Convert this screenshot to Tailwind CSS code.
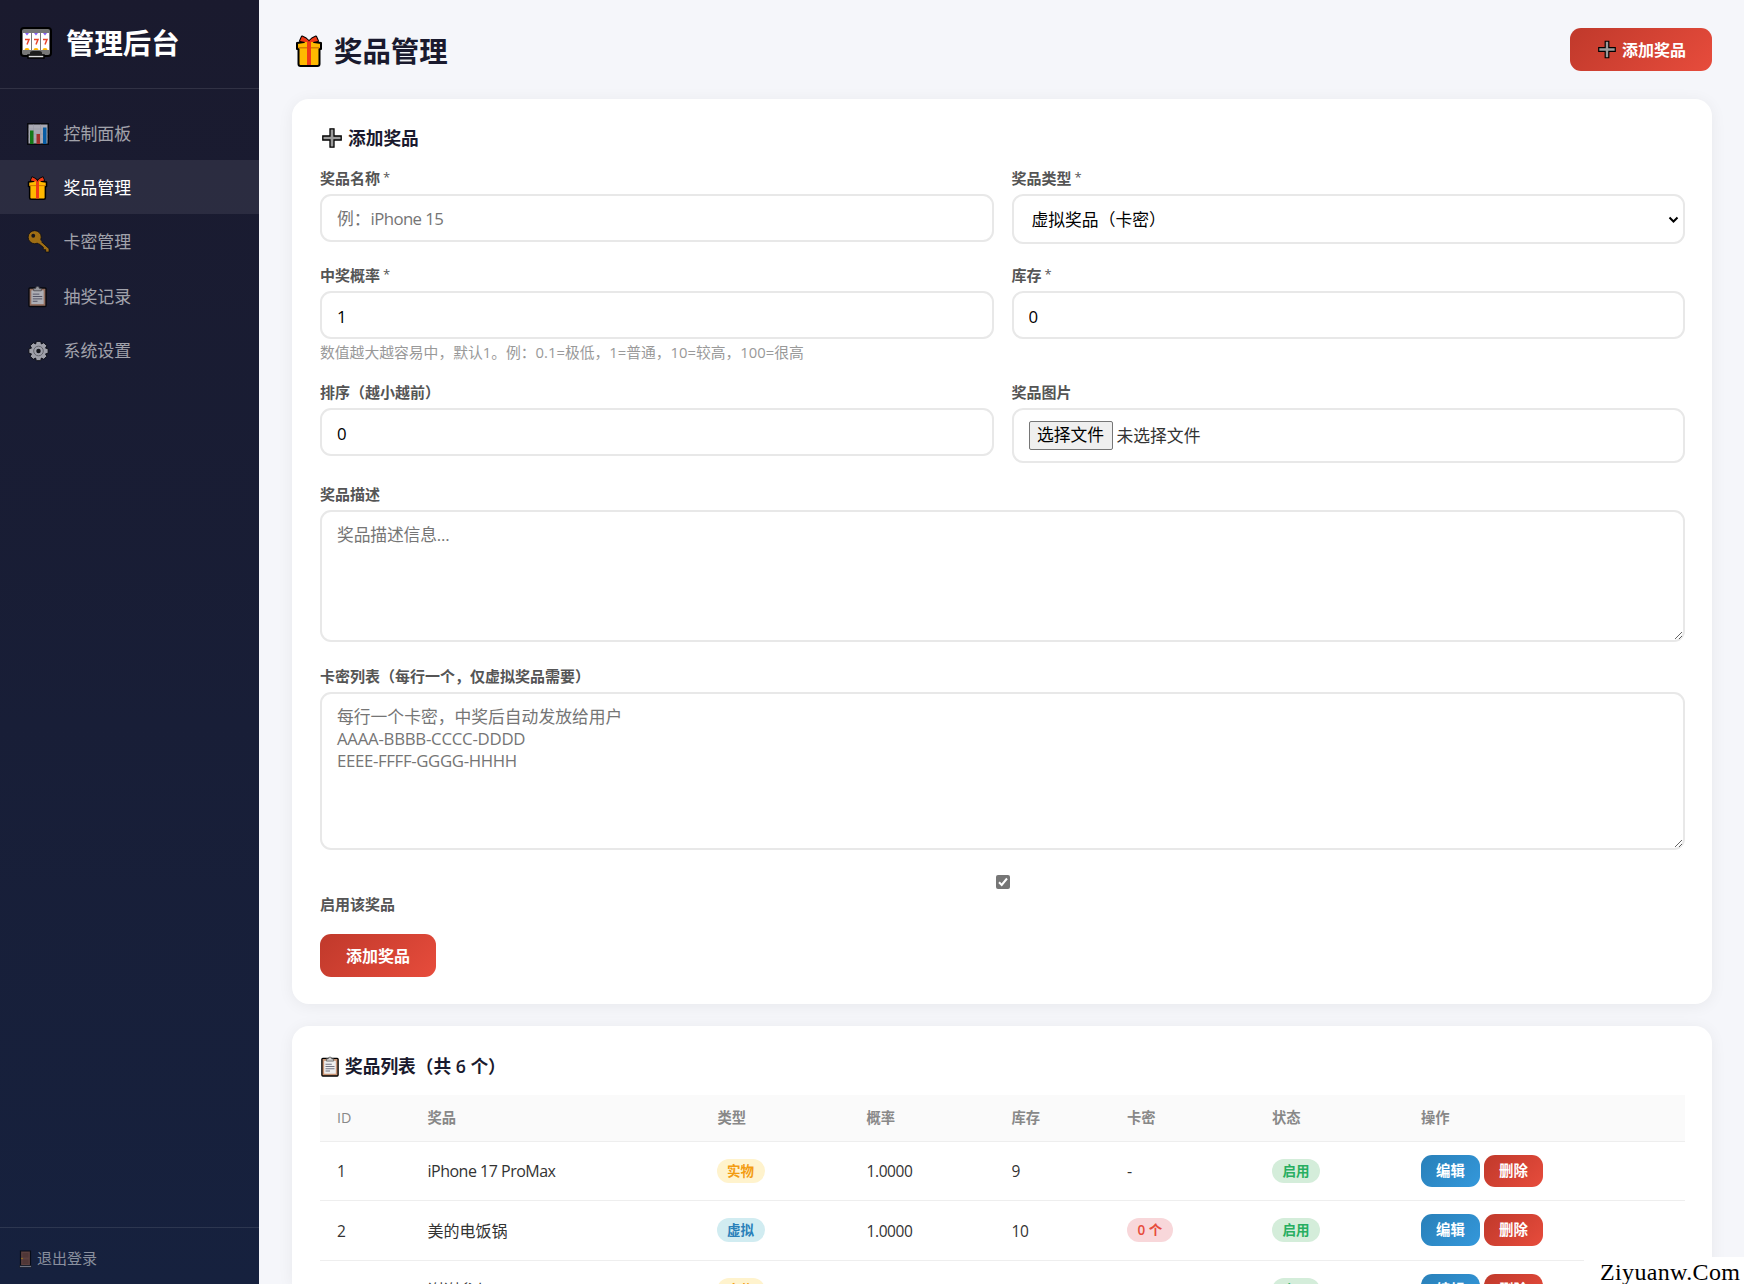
<!DOCTYPE html>
<html lang="zh-CN">

<head>
  <meta charset="UTF-8">
  <meta name="viewport" content="width=device-width, initial-scale=1.0">
  <script src="https://cdn.jsdelivr.net/npm/@tailwindcss/browser@4"></script>
  <title>奖品管理</title>
</head>

<body class="h-screen overflow-hidden flex bg-[#f5f6fa] text-[#333] font-['Open_Sans','Noto_Sans_CJK_SC',sans-serif]">

  <!-- iconos -->
  <svg class="hidden">
    <symbol id="i-slot" viewBox="0 0 32 32">
      <rect x="1" y="1" width="30" height="28" rx="3" fill="#777" stroke="#000" stroke-width="2" />
      <path d="M8 28h16v3H8z" fill="#ddd" stroke="#000" stroke-width="1.5" />
      <path d="M10 28v-2q0-2 3-2h6q3 0 3 2v2z" fill="#1c1c1c" />
      <path d="M3 6h8v17H3zM12 6h8v17h-8zM21 6h8v17h-8z" fill="#fff" />
      <path d="M5 6h4l-2 2.5zM14 6h4l-2 2.5zM23 6h4l-2 2.5z" fill="#8661f5" />
      <path d="M4.500 23a2.500 2 0 0 1 5 0zM13.500 23a2.500 2 0 0 1 5 0zM22.500 23a2.500 2 0 0 1 5 0z" fill="#ffb900" />
      <path d="M5 12.500h4l-2 5M14 12.500h4l-2 5M23 12.500h4l-2 5" fill="none" stroke="#e8442c" stroke-width="1.500" />
    </symbol>
    <symbol id="i-chart" viewBox="0 0 22 22">
      <rect x=".75" y=".75" width="20.500" height="20.500" fill="#e6e6ea" stroke="#000" stroke-width="1.500" />
      <path d="M1.500 6h19M1.500 11h19M1.500 16h19M6.500 1.500v19M13.500 1.500v19" stroke="#cfcfd6" stroke-width=".6" />
      <path d="M3 7.500h3.500V21H3z" fill="#13a10e" />
      <path d="M9.500 11H13v10H9.500z" fill="#e03a2c" />
      <path d="M16 4.500h3.500V21H16z" fill="#0078d4" />
    </symbol>
    <symbol id="i-gift" viewBox="0 0 28 32">
      <path d="M9 7 5 6 7 1.500l4 2q3 2 3 4 0-2 3-4l4-2L23 6l-4 1 7 1v6h-1.500v15q0 2-2 2h-17q-2 0-2-2V14H2V8z" fill="#ffb900" stroke="#000" stroke-width="2" stroke-linejoin="round" />
      <path d="M5 6 7 1.500l4 2q3 2 3 4 0-2 3-4l4-2L23 6l-5 1H10z" fill="#f03a17" />
      <path d="M3.500 12h21v1.500h-21z" fill="#d67f00" />
      <path d="M12 7h4v23h-4z" fill="#f03a17" />
    </symbol>
    <symbol id="i-key" viewBox="0 0 24 24">
      <path d="m11 9 11.500 10.500V23H19v-2.500h-2.500V18L9 12z" fill="#e69a05" stroke="#000" stroke-width=".8" />
      <circle cx="7.500" cy="7.500" r="6.800" fill="#e69a05" stroke="#000" stroke-width=".8" />
      <path d="M11 8l4 4-3.500 2L9 12z" fill="#e69a05" />
      <circle cx="6" cy="6" r="2" fill="#111" />
    </symbol>
    <symbol id="i-clip" viewBox="0 0 20 23">
      <rect x="1" y="2.500" width="18" height="19.500" rx="1" fill="#c89372" stroke="#000" stroke-width="1.500" />
      <path d="M3.500 5h13v14.500h-13z" fill="#eee" />
      <path d="M6 5.500V3h2q0-2 2-2t2 2h2v2.500z" fill="#ccc" stroke="#555" stroke-width=".8" />
      <path d="M5 9h7M5 11.500h10M5 14h10M5 16.500h5" stroke="#667" stroke-width="1" />
    </symbol>
    <symbol id="i-gear" viewBox="0 0 24 24">
      <path d="M9.500 1h5l.8 3 2.700-1.500L21.500 6 20 8.700l3 .8v5l-3 .8 1.500 2.700-3.500 3.500-2.700-1.500-.8 3h-5l-.8-3L6 21.500 2.500 18 4 15.300l-3-.8v-5l3-.8L2.500 6 6 2.500 8.700 4z" fill="#d8d8dc" stroke="#000" stroke-width="1" stroke-linejoin="round" />
      <circle cx="12" cy="12" r="5.500" fill="none" stroke="#777" stroke-width="1" />
      <circle cx="12" cy="12" r="2.600" fill="#111" />
    </symbol>
    <symbol id="i-door" viewBox="0 0 13 18">
      <path d="M1.500 1h10v14.500h-10z" fill="#8b5540" stroke="#000" stroke-width="1.200" />
      <path d="M3.500 3h6v4.500h-6zM3.500 9.500h6v4.500h-6z" fill="#774634" />
      <path d="M.5 15.500h12v2H.5z" fill="#a9a9b0" stroke="#000" stroke-width=".6" />
      <circle cx="3" cy="8.500" r=".8" fill="#ffb900" />
    </symbol>
    <symbol id="i-plus" viewBox="0 0 20 20">
      <path d="M8 .8h4V8h7.200v4H12v7.200H8V12H.8V8H8z" fill="#9b9b9b" stroke="#000" stroke-width="1.300" />
    </symbol>
  </svg>

  <aside class="w-[259px] shrink-0 h-full flex flex-col bg-linear-to-b from-[#1a1a2e] to-[#16213e]">
    <div class="h-[89px] shrink-0 flex items-center gap-[14px] pl-[20px] pb-[2px] border-b border-white/10">
      <svg class="w-8 h-8"><use href="#i-slot" /></svg>
      <h2 class="text-[28.400px] leading-none font-bold text-white">管理后台</h2>
    </div>
    <nav class="mt-[17px] flex-1 text-[16.900px] text-white/60">
      <a class="h-[54.300px] flex items-center pl-[27px] pt-px"><svg class="w-[22px] h-[22px] mr-[14.500px] opacity-70"><use href="#i-chart" /></svg>控制面板</a>
      <a class="h-[54px] flex items-center pl-[27px] pt-px bg-white/8 text-white"><svg class="w-[21px] h-[24px] mr-[15.500px]"><use href="#i-gift" /></svg>奖品管理</a>
      <a class="h-[54.300px] flex items-center pl-[27px] pt-px"><svg class="w-[24px] h-[23px] mr-[12.500px] opacity-65"><use href="#i-key" /></svg>卡密管理</a>
      <a class="h-[54.300px] flex items-center pl-[28px] pt-[2px]"><svg class="w-[19px] h-[23px] mr-[16.500px] opacity-70"><use href="#i-clip" /></svg>抽奖记录</a>
      <a class="h-[54.300px] flex items-center pl-[28px] pt-[2px]"><svg class="w-[21px] h-[22px] mr-[14.500px] opacity-70"><use href="#i-gear" /></svg>系统设置</a>
    </nav>
    <div class="h-[57px] shrink-0 flex items-center pl-[19px] pt-[5px] border-t border-white/10 text-[15px] text-white/50">
      <svg class="w-[13px] h-[18px] mr-[5px] opacity-60"><use href="#i-door" /></svg>退出登录
    </div>
  </aside>

  <main class="flex-1 pl-[33px] pr-[32px] pt-[28px]">
    <header class="h-[43px] mb-[28px] flex items-center justify-between">
      <h1 class="flex items-center text-[28.400px] leading-none font-bold text-[#1a1a2e] pl-[3px] pt-[3px]">
        <svg class="w-[28px] h-[32px] mr-[11px]"><use href="#i-gift" /></svg>奖品管理
      </h1>
      <button class="w-[142px] h-[43px] flex items-center pl-[28px] rounded-[11px] bg-linear-135 from-[#c0392b] to-[#e74c3c] text-white text-[16px] font-semibold">
        <svg class="w-[18px] h-[19px] mr-[6px]"><use href="#i-plus" /></svg>添加奖品
      </button>
    </header>

    <section class="h-[905px] mb-[22px] pl-[28px] pr-[27px] pt-[27px] bg-white rounded-[17px] shadow-[0_2px_16px_rgba(0,0,0,0.06)]">
      <h3 class="h-6 mb-[18px] flex items-center text-[17.700px] font-semibold text-[#1a1a2e]">
        <svg class="w-[20px] h-[20px] ml-[2px] mr-[6px]"><use href="#i-plus" /></svg>添加奖品
      </h3>

      <div class="grid grid-cols-2 gap-x-[18px] text-[16.800px] text-black">
        <div class="mb-[23px]">
          <label class="flex items-center h-5 mb-[6px] text-[15px] font-semibold text-[#555]">奖品名称<span class="ml-[3px] text-[13px] font-normal">*</span></label>
          <div class="h-12 flex items-center px-[15px] pt-[2px] border-2 border-[#e8e8e8] rounded-[11px] text-[#757575]">例：<span class="tracking-[-0.600px]">iPhone 15</span></div>
        </div>
        <div>
          <label class="flex items-center h-5 mb-[6px] text-[15px] font-semibold text-[#555]">奖品类型<span class="ml-[3px] text-[13px] font-normal">*</span></label>
          <div class="h-[50px] flex items-center justify-between pl-[18px] pr-[4px] pt-[2px] border-2 border-[#e8e8e8] rounded-[11px]">虚拟奖品（卡密）
            <svg class="w-[11px] h-[8px]" viewBox="0 0 11 8"><path d="m1.500 1.500 4 4 4-4" fill="none" stroke="#000" stroke-width="2" /></svg>
          </div>
        </div>
        <div class="mb-[21px]">
          <label class="flex items-center h-5 mb-[6px] text-[15px] font-semibold text-[#555]">中奖概率<span class="ml-[3px] text-[13px] font-normal">*</span></label>
          <input class="block w-full h-12 px-[15px] pt-[2px] border-2 border-[#e8e8e8] rounded-[11px]" value="1" />
          <p class="h-[18px] mt-[4px] flex items-center text-[14.800px] text-[#999] whitespace-nowrap">数值越大越容易中，默认1。例：0.1=极低，1=普通，10=较高，100=很高</p>
        </div>
        <div>
          <label class="flex items-center h-5 mb-[6px] text-[15px] font-semibold text-[#555]">库存<span class="ml-[3px] text-[13px] font-normal">*</span></label>
          <input class="block w-full h-12 px-[15px] pt-[2px] border-2 border-[#e8e8e8] rounded-[11px]" value="0" />
        </div>
        <div>
          <label class="flex items-center h-5 mb-[6px] text-[15px] font-semibold text-[#555]">排序（越小越前）</label>
          <input class="block w-full h-12 px-[15px] pt-[2px] border-2 border-[#e8e8e8] rounded-[11px]" value="0" />
        </div>
        <div>
          <label class="flex items-center h-5 mb-[6px] text-[15px] font-semibold text-[#555]">奖品图片</label>
          <div class="h-[55px] flex items-center px-[15px] border-2 border-[#e8e8e8] rounded-[11px] text-[#333]">
            <button class="w-[84px] h-[29px] mr-[4px] border border-[#767676] rounded-[2px] bg-[#efefef] text-black leading-none">选择文件</button>未选择文件
          </div>
        </div>
      </div>

      <label class="flex items-center h-5 mt-[21px] mb-[6px] text-[15px] font-semibold text-[#555]">奖品描述</label>
      <textarea class="block w-full h-[132px] px-[15px] py-[12px] border-2 border-[#e8e8e8] rounded-[11px] text-[16.800px] leading-[22px] placeholder:text-[#757575] placeholder:tracking-[-0.150px]" placeholder="奖品描述信息..."></textarea>

      <label class="flex items-center h-5 mt-[24px] mb-[6px] text-[15px] font-semibold text-[#555]">卡密列表（每行一个，仅虚拟奖品需要）</label>
      <div class="relative text-[16.800px] leading-[22px]">
        <textarea class="block w-full h-[158px] border-2 border-[#e8e8e8] rounded-[11px]"></textarea>
        <div class="absolute left-[17px] top-[14px] text-[#757575] pointer-events-none">
          <p class="h-[22px]">每行一个卡密，中奖后自动发放给用户</p>
          <p class="h-[22px] tracking-[-0.250px]">AAAA-BBBB-CCCC-DDDD</p>
          <p class="h-[22px] tracking-[-0.350px]">EEEE-FFFF-GGGG-HHHH</p>
        </div>
      </div>

      <svg class="block w-[14px] h-[14px] mt-[25px] mx-auto" viewBox="0 0 14 14">
        <rect width="14" height="14" rx="2" fill="#767676" />
        <path d="m3 7.300 2.700 2.700L11 3.500" fill="none" stroke="#fff" stroke-width="2" />
      </svg>
      <label class="flex items-center h-5 mt-[5px] text-[15px] font-semibold text-[#555]">启用该奖品</label>
      <button class="mt-[20px] w-[116px] h-[43px] rounded-[11px] bg-linear-135 from-[#c0392b] to-[#e74c3c] text-white text-[16px] font-semibold">添加奖品</button>
    </section>

    <section class="h-[258px] overflow-hidden pl-[28px] pr-[27px] pt-[28px] bg-white rounded-t-[17px] shadow-[0_2px_16px_rgba(0,0,0,0.06)]">
      <h3 class="h-[25px] mb-[16px] flex items-center text-[17.700px] font-semibold text-[#1a1a2e]">
        <svg class="w-[18px] h-[21px] ml-[1px] mr-[6px]"><use href="#i-clip" /></svg>奖品列表（共 6 个）
      </h3>
      <table class="w-full table-fixed text-left text-[16px]">
        <colgroup>
          <col class="w-[90.500px]"><col class="w-[290px]"><col class="w-[149px]"><col class="w-[145px]"><col class="w-[115.500px]"><col class="w-[145px]"><col class="w-[149px]"><col>
        </colgroup>
        <thead>
          <tr class="h-[46px] bg-[#fafafa] border-b border-[#eee] text-[14.300px] text-[#888]">
            <th class="pl-[17px] font-medium">ID</th>
            <th class="pl-[17px] font-semibold">奖品</th>
            <th class="pl-[17px] font-semibold">类型</th>
            <th class="pl-[17px] font-semibold">概率</th>
            <th class="pl-[17px] font-semibold">库存</th>
            <th class="pl-[17px] font-semibold">卡密</th>
            <th class="pl-[17px] font-semibold">状态</th>
            <th class="pl-[17px] font-semibold">操作</th>
          </tr>
        </thead>
        <tbody id="prizes"></tbody>
      </table>
    </section>
  </main>

  <div class="absolute right-0 bottom-0 w-[160px] h-[27px] bg-white flex items-end pl-[16px] text-[24px] leading-[24px] text-black font-['Liberation_Serif',serif] whitespace-nowrap">
    <span class="tracking-[0.350px]">Ziyuanw.Com</span>
  </div>

  <script>
    const prizes = [
      { id: 1, name: 'iPhone 17 ProMax', real: true, stock: 9, cards: null },
      { id: 2, name: '美的电饭锅', real: false, stock: 10, cards: 0 },
      { id: 3, name: '谢谢参与', real: true, stock: 10, cards: null },
    ];
    const badge = 'inline-flex items-center h-6 mb-px px-[10.500px] rounded-full text-[13.500px] font-semibold align-middle';
    const btn = 'w-[59px] h-8 rounded-[11px] text-white text-[14.400px] font-semibold bg-linear-135';

    document.getElementById('prizes').innerHTML = prizes.map((p) => `
      <tr class="h-[59.500px] border-b border-[#eee]">
        <td class="pl-[17px] pt-[2px] text-[15.500px]">${p.id}</td>
        <td class="pl-[17px] pt-px tracking-[-0.500px]">${p.id === 1 ? p.name : `<span class="tracking-normal">${p.name}</span>`}</td>
        <td class="pl-[16px]"><span class="${badge} ${p.real ? 'bg-[#fff3cd] text-[#f39c12]' : 'bg-[#d1ecf1] text-[#2980b9]'}">${p.real ? '实物' : '虚拟'}</span></td>
        <td class="pl-[17px] pt-[2px] text-[15.500px] tracking-[-0.400px]">1.0000</td>
        <td class="pl-[17px] pt-[2px] text-[15.500px] tracking-[-0.400px]">${p.stock}</td>
        <td class="pl-[17px]">${p.cards === null ? '-' : `<span class="${badge} bg-[#f8d7da] text-[#e74c3c]">${p.cards} 个</span>`}</td>
        <td class="pl-[17px]"><span class="${badge} bg-[#d4edda] text-[#27ae60]">启用</span></td>
        <td class="pl-[17px]"><div class="flex gap-[4px]">
          <button class="${btn} from-[#2980b9] to-[#3498db]">编辑</button>
          <button class="${btn} from-[#c0392b] to-[#e74c3c]">删除</button>
        </div></td>
      </tr>`).join('');
  </script>
</body>

</html>
